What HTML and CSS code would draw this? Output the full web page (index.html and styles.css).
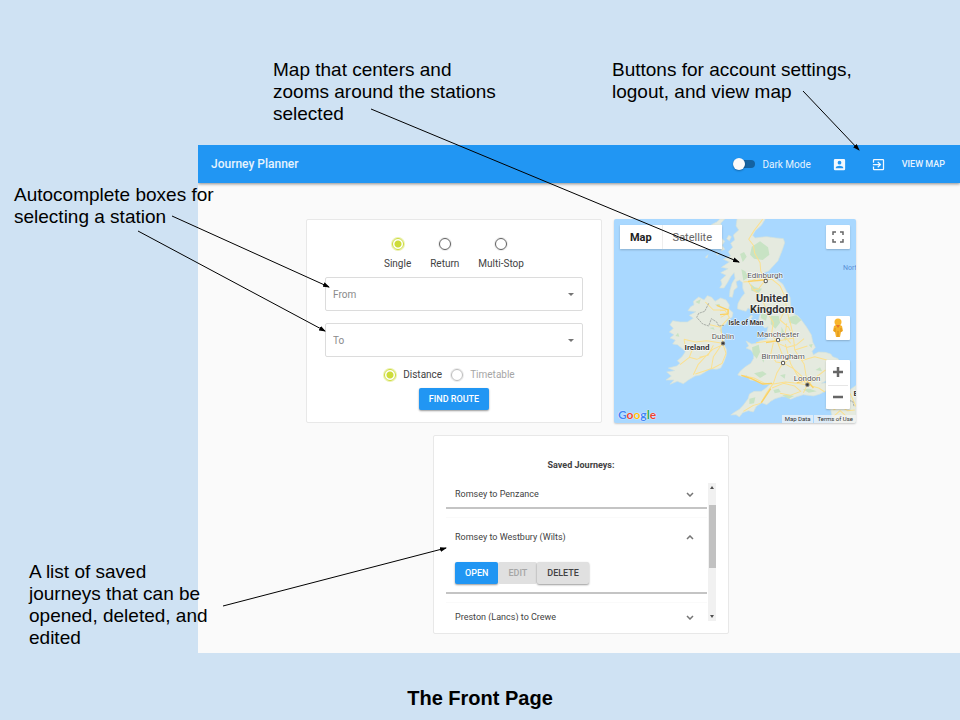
FILE: index.html
```html
<!DOCTYPE html>
<html lang="en">
<head>
<meta charset="utf-8">
<meta name="viewport" content="width=device-width, initial-scale=1">
<title>The Front Page</title>
<link rel="stylesheet" href="styles.css">
</head>
<body>
<div class="slide">
  <section class="app">
    <header class="bar">
      <h1 class="brand">Journey Planner</h1>
      <label class="switch"><input type="checkbox" role="switch"><span>Dark Mode</span></label>
      <button class="icon-btn account" aria-label="Account">
        <svg viewBox="0 0 24 24"><path d="M3 5v14a2 2 0 0 0 2 2h14a2 2 0 0 0 2-2V5a2 2 0 0 0-2-2H5a2 2 0 0 0-2 2zm12 4a3 3 0 1 1-6 0 3 3 0 0 1 6 0zm-9 8c0-2 4-3.100 6-3.100s6 1.100 6 3.100v1H6z"/></svg>
      </button>
      <button class="icon-btn logout" aria-label="Log out">
        <svg viewBox="0 0 24 24"><path d="M10.090 15.590 11.500 17l5-5-5-5-1.410 1.410L12.670 11H3v2h9.670zM19 3H5a2 2 0 0 0-2 2v4h2V5h14v14H5v-4H3v4a2 2 0 0 0 2 2h14a2 2 0 0 0 2-2V5a2 2 0 0 0-2-2z"/></svg>
      </button>
      <button class="text-btn">VIEW MAP</button>
    </header>

    <main class="content">
      <div class="top-row">
        <form class="card planner">
          <div class="trip">
            <label><input type="radio" name="trip" checked>Single</label>
            <label><input type="radio" name="trip">Return</label>
            <label><input type="radio" name="trip">Multi-Stop</label>
          </div>
          <div class="field">
            <input type="text" placeholder="From" aria-label="From">
            <svg viewBox="0 0 6 3"><path d="M0 0h6L3 3z"/></svg>
          </div>
          <div class="field">
            <input type="text" placeholder="To" aria-label="To">
            <svg viewBox="0 0 6 3"><path d="M0 0h6L3 3z"/></svg>
          </div>
          <div class="mode">
            <label><input type="radio" name="mode" checked>Distance</label>
            <label class="off"><input type="radio" name="mode" disabled>Timetable</label>
          </div>
          <button type="button" class="btn primary">FIND ROUTE</button>
        </form>

        <div class="map">
          <svg class="land" viewBox="0 0 242 204" preserveAspectRatio="xMidYMid slice">
            <g transform="translate(-14 -9) scale(.33333)">
              <g fill="#e5eadf" stroke="#d3e3dc" stroke-width="2" stroke-linejoin="round">
                <path d="M412 20 408 48 416 60 400 75 404 90 392 100 398 112 385 125 392 138 370 148 388 156 364 172 384 176 362 188 378 196 362 210 366 222 359 234 372 234 384 215 392 200 402 188 405 205 396 220 390 240 388 260 397 262 402 240 412 232 408 215 418 210 428 218 428 235 434 250 424 262 414 280 412 296 424 300 438 304 444 294 456 302 470 306 484 308 478 318 476 330 486 345 494 354 504 350 500 366 506 380 498 388 480 392 468 400 455 402 438 393 446 408 438 414 452 420 462 432 460 446 452 460 436 470 420 484 413 495 428 500 440 496 450 510 466 512 480 520 500 524 514 518 500 532 484 544 462 544 448 552 444 566 430 585 418 598 404 606 392 615 408 614 418 621 428 608 445 602 460 606 468 590 484 578 500 584 512 574 525 566 545 560 560 560 572 568 590 560 610 554 640 558 660 552 678 542 702 536 706 522 680 518 664 520 690 506 720 490 724 460 714 446 698 440 692 432 676 427 655 426 640 434 636 424 646 412 638 396 634 375 620 352 604 330 594 318 582 312 572 290 570 262 560 245 548 222 530 208 510 200 494 195 488 189 505 184 516 172 534 152 546 122 554 98 550 86 528 84 500 80 480 82 465 84 458 76 466 62 484 46 500 20z"/>
                <path d="M280 274 296 261 312 270 322 257 335 262 345 274 362 264 378 270 388 285 386 296 399 308 396 322 384 328 378 342 366 350 360 362 368 375 374 390 373 405 380 420 378 438 372 455 362 474 350 478 330 476 312 488 300 495 285 498 265 510 250 521 232 514 210 523 222 510 198 510 214 498 200 486 224 482 205 474 230 468 240 460 232 452 246 440 256 425 246 415 232 404 218 402 226 390 210 384 222 374 208 366 220 355 210 344 218 332 240 336 262 336 280 325 268 316 288 305 264 302 272 290 282 285z"/>
                <path d="M334 44 350 36 360 27 374 27 362 40 366 52 350 56zM364 84l10 10 -8 12 8 12 -10 4zM386 76l8 4-6 12-8-6zM348 128l8 4-5 4zM316 142l8-8-3 10zM446 323l8-8 4 4-8 12z"/>
                <path d="M748 540 768 526V642H700L692 600 676 594 700 582 748 585z"/>
              </g>
              <g fill="#c8e3c4">
                <path d="M455 110 480 94 504 112 508 134 488 150 462 146 450 134zM424 178l12 6 8 18-14 10zM420 132l12-6 8 14-12 16zM452 222l12 10 22 4-10 12-22-6zM484 310l18 4-4 18-16-8zM512 318l24 0 4 20-14 18-14-14zM564 322l24-6 16 14-16 14-20-6zM544 350l8 16 14 14-10 12-12-16zM456 412l20-8 4 22-10 20-12-14zM462 490l26-6 12 8-20 12zM482 440l12 4-4 14zM520 540l16-4 6 10-18 4zM546 556l20-2 16 4-16 8zM448 566l18-4-4 18-14 2zM608 538l20-2 22 8-24 4zM286 276l16-8-4 14zM344 284l14-2 4 8zM328 354l12-2 4 8zM226 378l8-10 4 12zM540 496l16-4-2 14zM646 480l14-8 6 12zM626 404l12-2-4 12z"/>
              </g>
              <g fill="none" stroke="#fbe08f" stroke-width="3" stroke-linejoin="round">
                <path d="M488 28 462 62 446 88 460 106 464 130 480 158 482 184 498 210M430 216 454 214 470 204 496 210 516 208 540 228 554 258 560 300 572 344 580 380 584 420 612 462 622 520M446 216 460 240 484 260 500 304 520 338 514 374 532 396 546 432 550 456M496 210 476 236 460 240M554 300 540 330 566 352 580 384 538 392 500 394M560 340 554 380 572 400M520 398 512 432 528 456 552 460 580 476 606 500 620 524 590 520 556 516 520 522 494 520 462 504 424 496M548 460 530 490 520 520 500 548 482 580 460 586 430 604M516 534 550 520 584 528 602 544 570 556 540 550M552 460 572 442 610 450 644 440 680 450M620 524 656 534 674 546M622 524 650 500 676 480M622 524 610 548M622 524 592 496 572 462 556 402M534 400 562 412 590 404 612 386M584 420 622 408M468 398 500 394M252 388 286 396 320 392 368 400 362 350 388 322 374 300 340 300 316 276M252 388 256 410 276 420 268 442M320 436 290 448 268 442 240 464M368 404 338 418 318 438 294 464 280 494M366 402 340 440 334 474M370 406 378 430 366 460 340 474 286 492M362 322 384 310 386 298 360 302M362 352 330 344M340 406 324 436 298 442M700 600 720 588 742 602 764 600M750 550 768 590M700 620 720 602 740 620"/>
              </g>
              <g fill="none" stroke="#fbd163" stroke-width="4">
                <path d="M424 496 454 506 488 522 516 520M498 398 534 392M444 214 494 210M590 518 622 512 640 534M350 286 384 300 384 312 360 314M512 536 484 578"/>
              </g>
              <path fill="none" stroke="#8d918d" stroke-width="2" stroke-dasharray="7 2" d="M326 280 314 304 296 310 290 322 308 342 326 348 334 326 350 336 356 348 372 346M748 572 758 574 762 590"/>
              <g fill="#fff" stroke="#555" stroke-width="3">
                <circle cx="497" cy="213" r="5"/><circle cx="534" cy="390" r="5"/><circle cx="549" cy="459" r="5"/>
              </g>
              <g fill="#333" stroke="#777" stroke-width="3"><circle cx="369" cy="400" r="5"/><circle cx="622" cy="524" r="5"/></g>
            </g>
            <g class="towns">
              <text x="151" y="59">Edinburgh</text>
              <text x="109" y="120">Dublin</text>
              <text x="164" y="118">Manchester</text>
              <text x="169" y="140">Birmingham</text>
              <text x="193" y="162">London</text>
              <text class="sea" x="229" y="51">Nort</text>
              <text class="region" x="83" y="131">Ireland</text>
              <text class="isle" x="132" y="106">Isle of Man</text>
              <text class="country" x="158" y="83">United</text>
              <text class="country" x="158" y="94">Kingdom</text>
              <text class="region" x="242" y="177">B</text>
            </g>
          </svg>
          <div class="map-type"><button class="on">Map</button><button>Satellite</button></div>
          <button class="map-btn full" aria-label="Full screen"><svg viewBox="0 0 12 12"><path d="M1 4V1h3M8 1h3v3M11 8v3H8M4 11H1V8"/></svg></button>
          <button class="map-btn person" aria-label="Street View"><svg viewBox="0 0 12 20"><path fill="#f6b229" d="M2 8Q6 5 10 8L11 13 9 14 8 19H4L3 14 1 13z"/><circle cx="6" cy="4" r="3.500" fill="#f9b52b"/><path d="M4 7h4L6 10z" fill="#e8762c"/><path d="M6 13v6M3 10v4M9 10v4" stroke="#d98e1c" fill="none"/></svg></button>
          <div class="zoom"><button aria-label="Zoom in"><svg viewBox="0 0 12 12"><path d="M6 1v10M1 6h10"/></svg></button><button aria-label="Zoom out"><svg viewBox="0 0 12 12"><path d="M1 6h10"/></svg></button></div>
          <div class="google"><span class="b">G</span><span class="r">o</span><span class="y">o</span><span class="b">g</span><span class="g">l</span><span class="r">e</span></div>
          <div class="credits"><a href="#">Map Data</a><a href="#">Terms of Use</a></div>
        </div>
      </div>

      <section class="card saved">
        <h2>Saved Journeys:</h2>
        <div class="scroller">
          <ul class="journeys">
            <li class="cut"><button class="head">Romsey to Penzance<svg viewBox="0 0 8 5"><path d="M1 1l3 3 3-3"/></svg></button></li>
            <li class="open">
              <button class="head">Romsey to Westbury (Wilts)<svg viewBox="0 0 8 5"><path d="M1 4l3-3 3 3"/></svg></button>
              <div class="actions"><button class="btn primary">OPEN</button><button class="btn" disabled>EDIT</button><button class="btn">DELETE</button></div>
            </li>
            <li><button class="head">Preston (Lancs) to Crewe<svg viewBox="0 0 8 5"><path d="M1 1l3 3 3-3"/></svg></button></li>
          </ul>
          <div class="track"><svg viewBox="0 0 4 3"><path d="M0 3h4L2 0z"/></svg><div class="thumb"></div><svg viewBox="0 0 4 3"><path d="M0 0h4L2 3z"/></svg></div>
        </div>
      </section>
    </main>
  </section>

  <p class="caption">The Front Page</p>

  <p class="note note-map">Map that centers and<br>zooms around the stations<br>selected</p>
  <p class="note note-buttons">Buttons for account settings,<br>logout, and view map</p>
  <p class="note note-boxes">Autocomplete boxes for<br>selecting a station</p>
  <p class="note note-list">A list of saved<br>journeys that can be<br>opened, deleted, and<br>edited</p>
  <svg class="arrows" viewBox="0 0 960 720">
    <defs><marker id="tip" viewBox="0 0 7 5" refX="6" refY="2.500" markerWidth="7" markerHeight="5" orient="auto"><path d="M0 0 7 2.500 0 5z"/></marker></defs>
    <g class="lines">
      <path d="M371 109 739 262"/>
      <path d="M803 91 859 150"/>
      <path d="M172 216 329 287"/>
      <path d="M138 231 325 331"/>
      <path d="M223 606 446 548"/>
    </g>
  </svg>
</div>
</body>
</html>
```
FILE: styles.css
```css
* { box-sizing: border-box; }
body { margin: 0; background: #cfe2f3; font-family: Roboto, sans-serif; color: #424242; }
button { font: inherit; color: inherit; border: 0; padding: 0; background: none; cursor: pointer; }
h1, h2, p, ul { margin: 0; padding: 0; }
svg { display: block; }

.slide { position: relative; min-height: 100vh; padding-top: 145px; overflow: hidden; }
.app { margin-left: 198px; background: #fafafa; overflow: hidden; }

/* App bar */
.bar { display: flex; align-items: center; height: 38px; padding: 0 15px 0 13px; background: #2196f3; color: #e6f3fe; box-shadow: 0 1px 3px rgba(0, 0, 0, .45); }
.brand { flex: 1; font-size: 12px; font-weight: 500; }
.switch { display: flex; align-items: center; gap: 7px; font-size: 10px; }
.switch input { appearance: none; position: relative; width: 22px; height: 8px; margin: 0; border-radius: 4px; background: #1462a0; }
.switch input::before { content: ""; position: absolute; left: 0; top: -2px; width: 12px; height: 12px; border-radius: 50%; background: #fafafa; box-shadow: 0 1px 2px rgba(0, 0, 0, .3); }
.icon-btn svg { width: 15px; height: 15px; fill: #f2f9ff; }
.account { margin-left: 21px; }
.logout { margin: 0 16px 0 24px; }
.text-btn { font-size: 9px; font-weight: 500; }

/* Content */
.content { padding: 36px 0 19px 4px; }
.top-row { display: grid; grid-template-columns: 11fr 9fr; gap: 12px; max-width: 550px; margin: 0 auto 12px; }
.card { background: #fff; border: 1px solid #e8e8e8; border-radius: 2px; }
.btn { height: 22px; padding: 0 10px; border-radius: 2px; background: #e0e0e0; font-size: 9px; font-weight: 500; box-shadow: 0 1px 2px rgba(0, 0, 0, .4); }
.btn:disabled { color: #a6a6a6; box-shadow: none; }
.btn.primary { background: #2196f3; color: #fff; }

.planner { display: flex; flex-direction: column; align-items: center; padding: 18px 18px 12px; font-size: 10px; }
.planner input[type="radio"] { appearance: none; width: 12px; height: 12px; margin: 0; border: 1px solid #616161; border-radius: 50%; box-shadow: 0 0 0 1px rgba(0, 0, 0, .08); }
.planner input[type="radio"]:checked { border-color: #cddc39; background: radial-gradient(circle, #cddc39 3px, #fff 4px); box-shadow: 0 0 0 1px rgba(205, 220, 57, .4); }
.planner input[type="radio"]:disabled { border-color: #bdbdbd; }
.trip { display: flex; gap: 19px; margin-bottom: 7px; }
.trip label { display: flex; flex-direction: column; align-items: center; gap: 8px; line-height: 12px; }
.field { display: flex; align-items: center; width: 100%; height: 34px; margin-bottom: 12px; padding: 0 8px 0 7px; border: 1px solid #dcdcdc; border-radius: 2px; }
.field input { flex: 1; min-width: 0; padding: 0; border: 0; outline: 0; background: none; font: 10px Roboto, sans-serif; }
.field input::placeholder { color: #8a8a8a; opacity: 1; }
.field svg { width: 6px; height: 3px; fill: #757575; }
.mode { display: flex; margin-bottom: 7px; }
.mode label { display: flex; align-items: center; gap: 7px; margin-right: 9px; line-height: 12px; }
.mode .off { color: #a6a6a6; }

/* Map */
.map { position: relative; overflow: hidden; background: #a9d8ff; border-radius: 2px; box-shadow: 0 1px 2px rgba(0, 0, 0, .2); }
.land { position: absolute; inset: 0; width: 100%; height: 100%; }
.towns { font-size: 8px; text-anchor: middle; fill: #555; stroke: #fff; stroke-width: 1px; paint-order: stroke; }
.towns .sea { text-anchor: start; font-size: 7px; fill: #5b8fd6; stroke: none; }
.towns .region { font-weight: 700; fill: #333; }
.towns .isle { font-size: 7px; font-weight: 700; fill: #333; }
.towns .country { font-size: 11px; font-weight: 700; fill: #333; }
.map-type { position: absolute; left: 6px; top: 6px; display: flex; height: 24px; background: #fff; font-size: 11px; color: #666; box-shadow: 0 1px 2px rgba(0, 0, 0, .2); }
.map-type button { padding: 0 10px; }
.map-type .on { font-weight: 700; color: #222; border-right: 1px solid #eee; }
.map-btn, .zoom { position: absolute; right: 6px; display: grid; place-items: center; width: 24px; height: 24px; background: #fff; border-radius: 1px; box-shadow: 0 1px 2px rgba(0, 0, 0, .2); }
.full { top: 6px; }
.full svg { width: 12px; height: 12px; fill: none; stroke: #666; stroke-width: 1.500; }
.person { top: 97px; }
.person svg { width: 12px; height: 20px; }
.zoom { top: 141px; height: 49px; }
.zoom button { display: grid; place-items: center; width: 20px; height: 24px; }
.zoom button + button { border-top: 1px solid #e6e6e6; }
.zoom svg { width: 12px; height: 12px; stroke: #666; stroke-width: 2.500; }
.google { position: absolute; left: 4px; bottom: 1px; font: 700 12px/14px Lato, sans-serif; text-shadow: 0 0 1px #fff, 0 0 1px #fff; }
.google .b { color: #4285f4; }
.google .r { color: #ea4335; }
.google .y { color: #fbbc05; }
.google .g { color: #34a853; }
.credits { position: absolute; right: 0; bottom: 0; display: flex; gap: 1px; font-size: 6px; line-height: 8px; }
.credits a { padding: 0 3px; background: rgba(245, 245, 245, .7); color: #333; text-decoration: none; }

/* Saved journeys */
.saved { max-width: 296px; margin: 0 auto; padding: 23px 12px 12px; font-size: 9px; }
.saved h2 { font-size: 9px; font-weight: 700; line-height: 12px; text-align: center; margin-bottom: 12px; }
.scroller { display: flex; gap: 1px; height: 138px; overflow: hidden; }
.journeys { flex: 1; display: flex; flex-direction: column; gap: 8px; list-style: none; }
.journeys li { flex: none; padding: 0 13px 0 9px; border-bottom: 2px solid #c4c4c4; }
.journeys li + li { border-top: 1px solid #fafafa; }
.head { display: flex; align-items: center; justify-content: space-between; width: 100%; height: 28px; }
.journeys .cut { padding-bottom: 2px; }
.cut .head { height: 22px; }
.open .head { height: 38px; }
.journeys .open { padding-bottom: 8px; }
.head svg { width: 8px; height: 5px; fill: none; stroke: #757575; stroke-width: 1.500; }
.actions { display: flex; margin-top: 6px; }
.track { display: flex; flex-direction: column; align-items: center; width: 8px; padding: 3px 0; background: #f1f1f1; }
.track svg { width: 4px; height: 3px; fill: #505050; }
.thumb { width: 7px; height: 63px; margin: 16px 0 auto; background: #c1c1c1; }

/* Slide text and callouts */
.caption { margin-top: 33px; font: 700 20px/24px "Liberation Sans", sans-serif; text-align: center; color: #000; }
.note { position: absolute; font: 19px/22px "Liberation Sans", sans-serif; color: #000; white-space: nowrap; }
.note-map { left: 273px; top: 59px; }
.note-buttons { left: 612px; top: 59px; }
.note-boxes { left: 14px; top: 184px; }
.note-list { left: 29px; top: 561px; }
.arrows { position: absolute; left: 0; top: 0; width: 960px; height: 720px; fill: none; stroke: #000; stroke-width: 1; pointer-events: none; }
.arrows .lines path { marker-end: url("#tip"); }
.arrows marker path { fill: #000; stroke: none; }
```
